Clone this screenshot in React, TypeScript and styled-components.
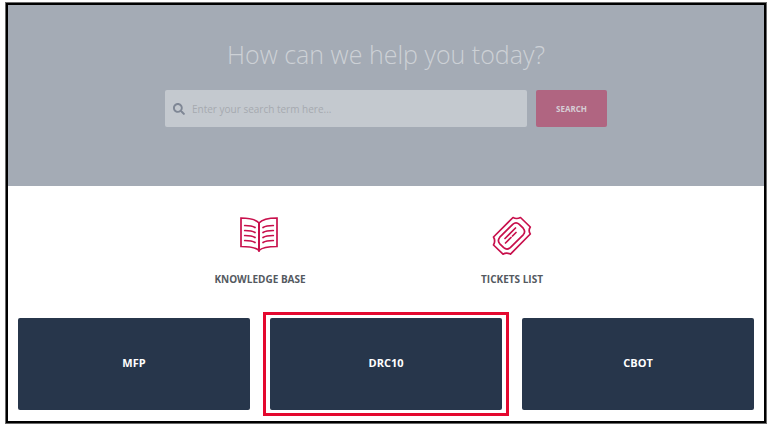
import React from "react";
import styled, { createGlobalStyle } from "styled-components";

const GlobalStyle = createGlobalStyle`
  * { box-sizing: border-box; }
  body {
    margin: 0;
    background: #fff;
    font-family: "Open Sans", "Noto Sans", sans-serif;
  }
`;

const Frame = styled.main`
  margin: 3px 6px;
  border: 2px solid #000;
  box-shadow: 0 0 0 1px #6a6a6a;
  background: #fff;
`;

const Hero = styled.section`
  display: flex;
  flex-direction: column;
  align-items: center;
  padding: 31px 16px 59px;
  background: #a4abb5;
`;

const Title = styled.h1`
  margin: 0 0 18px;
  font-size: 25px;
  line-height: 36px;
  font-weight: 300;
  color: #cdd1d6;
`;

const SearchForm = styled.form`
  display: flex;
  gap: 9px;
  width: 100%;
  max-width: 442px;
  height: 37px;
`;

const SearchField = styled.label`
  display: flex;
  flex: 1;
  align-items: center;
  gap: 7px;
  padding: 0 8px;
  border-radius: 2px;
  background: #c4c9cf;
  color: #7f8795;
`;

const SearchInput = styled.input`
  flex: 1;
  min-width: 0;
  padding: 0;
  border: 0;
  outline: 0;
  background: transparent;
  font: 400 10px/16px "Open Sans", "Noto Sans", sans-serif;
  color: #6f7784;
  &::placeholder { color: #a6aab0; opacity: 1; }
`;

const SearchButton = styled.button`
  width: 71px;
  padding: 0;
  border: 0;
  border-radius: 2px;
  background: #b06581;
  color: #d6cdd5;
  font: 700 8px/12px "Open Sans", "Noto Sans", sans-serif;
  cursor: pointer;
`;

const Shortcuts = styled.nav`
  display: flex;
  justify-content: center;
  padding: 30px 10px 0;
`;

const Shortcut = styled.a`
  display: flex;
  flex-direction: column;
  align-items: center;
  gap: 15px;
  width: 252px;
  color: #54595f;
  font-size: 10px;
  line-height: 16px;
  font-weight: 700;
  text-decoration: none;
  svg { color: #c8104c; }
`;

const Categories = styled.section`
  display: grid;
  grid-template-columns: repeat(3, 1fr);
  gap: 20px;
  padding: 31px 10px 11px;
`;

const Category = styled.button<{ $selected?: boolean }>`
  position: relative;
  height: 92px;
  padding: 0 8px 2px;
  border: 0;
  border-radius: 2px;
  background: #27364b;
  color: #fff;
  font: 700 11px/16px "Open Sans", "Noto Sans", sans-serif;
  cursor: pointer;

  &::after {
    content: "";
    display: ${(p) => (p.$selected ? "block" : "none")};
    position: absolute;
    inset: -6px -7px;
    border: 3px solid #e4082f;
  }
`;

const SearchIcon = () => (
  <svg width="12" height="12" viewBox="0 0 512 512" fill="currentColor" aria-hidden="true">
    <path d="M505 442.700 405.300 343c-4.500-4.500-10.600-7-17-7H372c27.600-35.300 44-79.700 44-128C416 93.100 322.900 0 208 0S0 93.100 0 208s93.100 208 208 208c48.300 0 92.700-16.400 128-44v16.300c0 6.400 2.500 12.500 7 17l99.700 99.700c9.400 9.400 24.600 9.400 33.900 0l28.300-28.300c9.400-9.400 9.400-24.600.1-34zM208 336c-70.700 0-128-57.200-128-128 0-70.700 57.200-128 128-128 70.700 0 128 57.200 128 128 0 70.700-57.200 128-128 128z" />
  </svg>
);

const BookIcon = () => (
  <svg width="40" height="40" viewBox="0 0 40 40" fill="none" stroke="currentColor" strokeWidth="1.700" strokeLinecap="round" aria-hidden="true">
    <path d="M19 7C16 3.500 9 2 1 2v28.500c7 0 14.500.5 18 4 3.500-3.500 11-4 18-4V2C29 2 22 3.500 19 7Z" />
    <path d="M19 7v28" strokeWidth="2" />
    <path d="M4.700 9.500c4.500 0 8 .5 10.300 2M4.700 14.500c4.500 0 8 .5 10.300 2M4.700 19.500c4.500 0 8 .5 10.300 2M4.700 24.500c4.500 0 8 .5 10.300 2" />
    <path d="M33.300 9.500c-4.500 0-8 .5-10.300 2M33.300 14.500c-4.500 0-8 .5-10.300 2M33.300 19.500c-4.500 0-8 .5-10.300 2M33.300 24.500c-4.500 0-8 .5-10.300 2" />
  </svg>
);

const TicketIcon = () => (
  <svg width="40" height="40" viewBox="0 0 40 40" fill="none" stroke="currentColor" strokeWidth="1.700" strokeLinejoin="round" strokeLinecap="round" aria-hidden="true">
    <path d="M21 1.500Q24.500 3.500 28.500 1.500L38.300 11Q36 14.500 38.300 18L18.500 38.200Q14.500 36 11 38.200L1.500 29Q3.800 25 1.500 21Z" />
    <path d="M7.800 21.200 20.700 8.300Q24 5.500 27.300 8.300L31.200 12.200Q34 15.500 31.200 18.800L18.300 31.700Q15 34.500 11.700 31.700L7.800 27.800Q5 24.500 7.800 21.200Z" />
    <path d="m13 22.500 10.500-10.500M13.500 27l5.500-5.500M20.500 20l3.500-3.500" />
  </svg>
);

const categories = [
  { name: "MFP" },
  { name: "DRC10", selected: true },
  { name: "CBOT" },
];

export default function App() {
  return (
    <>
      <GlobalStyle />
      <Frame>
        <Hero>
          <Title>How can we help you today?</Title>
          <SearchForm role="search" onSubmit={(e) => e.preventDefault()}>
            <SearchField>
              <SearchIcon />
              <SearchInput type="text" aria-label="Search term" placeholder="Enter your search term here..." />
            </SearchField>
            <SearchButton type="submit">SEARCH</SearchButton>
          </SearchForm>
        </Hero>
        <Shortcuts>
          <Shortcut href="#knowledge-base">
            <BookIcon />
            KNOWLEDGE BASE
          </Shortcut>
          <Shortcut href="#tickets">
            <TicketIcon />
            TICKETS LIST
          </Shortcut>
        </Shortcuts>
        <Categories>
          {categories.map((c) => (
            <Category key={c.name} type="button" $selected={c.selected}>
              {c.name}
            </Category>
          ))}
        </Categories>
      </Frame>
    </>
  );
}
